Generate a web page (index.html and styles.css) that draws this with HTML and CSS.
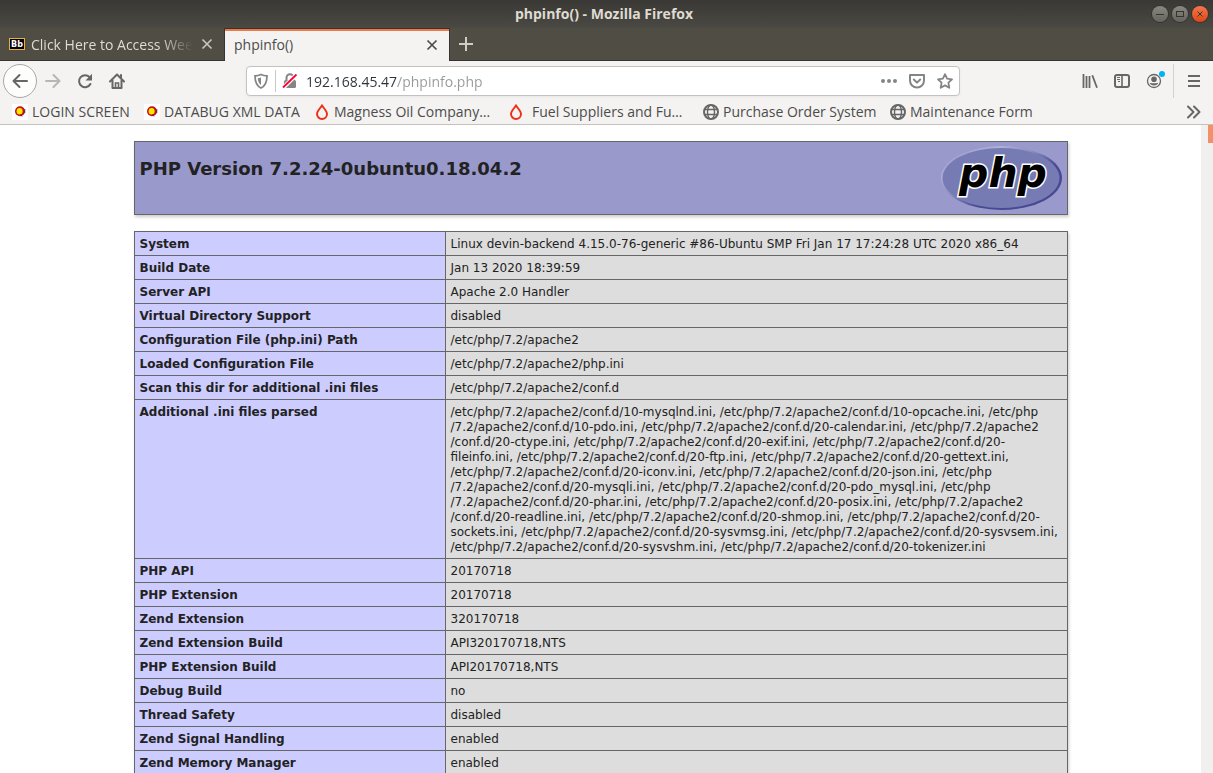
FILE: index.html
```html
<!DOCTYPE html>
<html lang="en">
<head>
<meta charset="utf-8">
<title>phpinfo()</title>
<link rel="stylesheet" href="styles.css">
</head>
<body>
<div class="window">
  <header class="top">
    <div class="titlebar">
      <div class="window-title">phpinfo() - Mozilla Firefox</div>
      <div class="window-buttons">
        <button class="win-btn" aria-label="Minimize"><svg viewBox="0 0 16 16"><path d="M4 8.5h8"/></svg></button>
        <button class="win-btn" aria-label="Maximize"><svg viewBox="0 0 16 16"><rect x="4.5" y="5.5" width="7" height="5"/></svg></button>
        <button class="win-btn win-close" aria-label="Close"><svg viewBox="0 0 16 16"><path d="M5.5 5.5l5 5M10.5 5.5l-5 5"/></svg></button>
      </div>
    </div>
    <div class="tabs">
      <div class="tab">
        <svg class="icon" viewBox="0 0 16 16"><rect x=".5" y="2.5" width="15" height="11" fill="#000" stroke="#e8b03a"/><text x="8" y="11" class="bb" text-anchor="middle">Bb</text></svg>
        <span class="tab-label tab-fade">Click Here to Access Wee</span>
        <button class="tab-close" aria-label="Close tab"><svg viewBox="0 0 16 16"><path d="M3.5 3.5l9 9M12.5 3.5l-9 9"/></svg></button>
      </div>
      <div class="tab active">
        <span class="tab-label">phpinfo()</span>
        <button class="tab-close" aria-label="Close tab"><svg viewBox="0 0 16 16"><path d="M3.5 3.5l9 9M12.5 3.5l-9 9"/></svg></button>
      </div>
      <button class="new-tab" aria-label="New tab"><svg class="icon" viewBox="0 0 16 16"><path d="M8 1v14M1 8h14" fill="none" stroke="#d0cdc6" stroke-width="2"/></svg></button>
    </div>
    <nav class="toolbar">
      <button class="tool back" aria-label="Back"><svg class="icon" viewBox="0 0 16 16"><path class="line" d="M15 8H2M7.5 2L1.5 8l6 6"/></svg></button>
      <button class="tool dim" aria-label="Forward"><svg class="icon" viewBox="0 0 16 16"><path class="line" d="M1 8h13M8.5 2l6 6-6 6"/></svg></button>
      <button class="tool" aria-label="Reload"><svg class="icon" viewBox="0 0 16 16"><path class="line" d="M12.6 4.2A6 6 0 1 0 13.4 11"/><path d="M15 .8v6.7H8.500z" fill="currentColor"/></svg></button>
      <button class="tool" aria-label="Home"><svg class="icon" viewBox="0 0 16 16"><path class="line" d="M1 8.500L8 1.500l7 7M3.500 7.500V15h9V7.500M12 2v3"/><path d="M6.500 15v-5h3v5" fill="none" stroke="currentColor" stroke-width="1.600"/></svg></button>
      <div class="urlbar">
        <svg class="icon" viewBox="0 0 16 16"><path d="M8 1.500c2 1 4 1.300 6 1.300C14 9 12.500 13 8 15 3.500 13 2 9 2 2.800c2 0 4-.3 6-1.300z" fill="none" stroke="currentColor" stroke-width="1.800"/><path d="M8 4.500v7.500C6 10.500 5 8.500 4.800 5.300 6 5.200 7 5 8 4.500z" fill="currentColor"/></svg>
        <span class="url-sep"></span>
        <svg class="icon" viewBox="0 0 16 16"><path d="M4.500 7V4.800a3.500 3.500 0 0 1 7 0V7" fill="none" stroke="currentColor" stroke-width="2"/><rect x="2" y="7" width="12" height="8" rx="1.500" fill="currentColor"/><path d="M1.500 14.500l13-13" stroke="#fff" stroke-width="4"/><path d="M1 14.500l13.500-13" stroke="#ff0039" stroke-width="1.800"/></svg>
        <input class="url" type="text" aria-label="Address" value="192.168.45.47/phpinfo.php">
        <button class="url-btn" aria-label="Page actions"><svg class="icon" viewBox="0 0 16 16"><g fill="currentColor"><circle cx="2" cy="8" r="2"/><circle cx="8" cy="8" r="2"/><circle cx="14" cy="8" r="2"/></g></svg></button>
        <button class="url-btn" aria-label="Save to Pocket"><svg class="icon" viewBox="0 0 16 16"><path class="line" d="M1 2h14v5.500a7 7 0 0 1-14 0zM4.800 6.500L8 9.600l3.200-3.100"/></svg></button>
        <button class="url-btn" aria-label="Bookmark this page"><svg class="icon" viewBox="0 0 16 16"><path d="M8 1.200l2.100 4.500 4.900.6-3.600 3.400.9 5.100L8 12.400l-4.300 2.400.9-5.100L1 6.300l4.900-.6z" fill="none" stroke="currentColor" stroke-width="1.800" stroke-linejoin="round"/></svg></button>
      </div>
      <div class="tools-right">
        <button class="tool" aria-label="Library"><svg class="icon" viewBox="0 0 16 16"><path d="M1.500 1v14M4.500 3v12M7.500 3v12M10.300 2.300L15 14.700" fill="none" stroke="currentColor" stroke-width="1.800"/></svg></button>
        <button class="tool" aria-label="Sidebars"><svg class="icon" viewBox="0 0 16 16"><rect class="line" x="1" y="2" width="14" height="12" rx="2"/><path d="M8 2v12" stroke="currentColor" stroke-width="1.600"/><path d="M3 4.500h3M3 6.500h3M4 8.500h2" stroke="currentColor"/></svg></button>
        <button class="tool account" aria-label="Account"><svg class="icon" viewBox="0 0 16 16"><circle cx="8" cy="8" r="6.500" fill="none" stroke="currentColor" stroke-width="1.300"/><circle cx="8" cy="6.200" r="2.800" fill="currentColor"/><path d="M3.800 9.700c2.500.8 5.900.8 8.400 0-.6 3.700-7.800 3.700-8.400 0z" fill="currentColor"/></svg><span class="badge"></span></button>
        <span class="tool-sep"></span>
        <button class="tool" aria-label="Menu"><svg class="icon" viewBox="0 0 16 16"><path d="M2 3h12M2 8h12M2 13h12" stroke="currentColor" stroke-width="2"/></svg></button>
      </div>
    </nav>
    <nav class="bookmarks">
      <a class="bookmark" href="#"><svg class="icon" viewBox="0 0 16 16"><rect width="16" height="16" fill="#fff"/><ellipse cx="8" cy="7.200" rx="5" ry="5" fill="#c4101c"/><ellipse cx="7.600" cy="7.200" rx="3" ry="3.300" fill="#ffe600"/><path d="M8.500 10l1.500 2.500M12.800 5v4" stroke="#333" stroke-width=".8"/></svg>LOGIN SCREEN</a>
      <a class="bookmark" href="#"><svg class="icon" viewBox="0 0 16 16"><rect width="16" height="16" fill="#fff"/><ellipse cx="8" cy="7.200" rx="5" ry="5" fill="#c4101c"/><ellipse cx="7.600" cy="7.200" rx="3" ry="3.300" fill="#ffe600"/><path d="M8.500 10l1.500 2.500M12.800 5v4" stroke="#333" stroke-width=".8"/></svg>DATABUG XML DATA</a>
      <a class="bookmark" href="#"><svg class="icon" viewBox="0 0 16 16"><path d="M8 1.500c2 3 5 5.700 5 8.500a5 5 0 0 1-10 0c0-2.800 3-5.500 5-8.500z" fill="none" stroke="#f02c13" stroke-width="1.900"/></svg>Magness Oil Company…</a>
      <a class="bookmark wide" href="#"><svg class="icon" viewBox="0 0 16 16"><path d="M8 1.500c2 3 5 5.700 5 8.500a5 5 0 0 1-10 0c0-2.800 3-5.500 5-8.500z" fill="none" stroke="#f02c13" stroke-width="1.900"/></svg>Fuel Suppliers and Fu…</a>
      <a class="bookmark" href="#"><svg class="icon" viewBox="0 0 16 16"><g fill="none" stroke="#666" stroke-width="1.400"><circle cx="8" cy="8" r="7" stroke-width="2"/><ellipse cx="8" cy="8" rx="3.500" ry="7"/><path d="M1.500 5.500h13M1.500 10.500h13"/></g></svg>Purchase Order System</a>
      <a class="bookmark" href="#"><svg class="icon" viewBox="0 0 16 16"><g fill="none" stroke="#666" stroke-width="1.400"><circle cx="8" cy="8" r="7" stroke-width="2"/><ellipse cx="8" cy="8" rx="3.500" ry="7"/><path d="M1.500 5.500h13M1.500 10.500h13"/></g></svg>Maintenance Form</a>
      <button class="more" aria-label="More bookmarks"><svg class="icon" viewBox="0 0 16 16"><path class="line" d="M2 2.500L7.500 8 2 13.500M8 2.500L13.500 8 8 13.500"/></svg></button>
    </nav>
  </header>
  <div class="viewport">
    <main class="page">
      <div class="banner">
        <h1>PHP Version 7.2.24-0ubuntu0.18.04.2</h1>
        <svg class="logo" viewBox="0 0 122 64" role="img" aria-label="PHP logo">
          <defs>
            <linearGradient id="rim" x1="0" y1="0" x2="1" y2="1"><stop offset="0" stop-color="#8f90c6"/><stop offset=".25" stop-color="#aeb2d5"/><stop offset=".42" stop-color="#8a8cc0"/><stop offset=".62" stop-color="#484893"/><stop offset="1" stop-color="#484893"/></linearGradient>
          </defs>
          <ellipse cx="61.500" cy="32" rx="60.500" ry="32" fill="url(#rim)"/>
          <ellipse cx="61" cy="32" rx="58.500" ry="30" fill="#777bb3"/>
          <text class="logo-text" x="63" y="41" text-anchor="middle">php</text>
        </svg>
      </div>
      <table class="info">
        <tbody>
          <tr><th scope="row">System</th><td>Linux devin-backend 4.15.0-76-generic #86-Ubuntu SMP Fri Jan 17 17:24:28 UTC 2020 x86_64</td></tr>
          <tr><th scope="row">Build Date</th><td>Jan 13 2020 18:39:59</td></tr>
          <tr><th scope="row">Server API</th><td>Apache 2.0 Handler</td></tr>
          <tr><th scope="row">Virtual Directory Support</th><td>disabled</td></tr>
          <tr><th scope="row">Configuration File (php.ini) Path</th><td>/etc/php/7.2/apache2</td></tr>
          <tr><th scope="row">Loaded Configuration File</th><td>/etc/php/7.2/apache2/php.ini</td></tr>
          <tr><th scope="row">Scan this dir for additional .ini files</th><td>/etc/php/7.2/apache2/conf.d</td></tr>
          <tr><th scope="row">Additional .ini files parsed</th><td>/etc/php/7.2/apache2/conf.d/10-mysqlnd.ini, /etc/php/7.2/apache2/conf.d/10-opcache.ini, /etc/php<br>/7.2/apache2/conf.d/10-pdo.ini, /etc/php/7.2/apache2/conf.d/20-calendar.ini, /etc/php/7.2/apache2<br>/conf.d/20-ctype.ini, /etc/php/7.2/apache2/conf.d/20-exif.ini, /etc/php/7.2/apache2/conf.d/20-<br>fileinfo.ini, /etc/php/7.2/apache2/conf.d/20-ftp.ini, /etc/php/7.2/apache2/conf.d/20-gettext.ini,<br>/etc/php/7.2/apache2/conf.d/20-iconv.ini, /etc/php/7.2/apache2/conf.d/20-json.ini, /etc/php<br>/7.2/apache2/conf.d/20-mysqli.ini, /etc/php/7.2/apache2/conf.d/20-pdo_mysql.ini, /etc/php<br>/7.2/apache2/conf.d/20-phar.ini, /etc/php/7.2/apache2/conf.d/20-posix.ini, /etc/php/7.2/apache2<br>/conf.d/20-readline.ini, /etc/php/7.2/apache2/conf.d/20-shmop.ini, /etc/php/7.2/apache2/conf.d/20-<br>sockets.ini, /etc/php/7.2/apache2/conf.d/20-sysvmsg.ini, /etc/php/7.2/apache2/conf.d/20-sysvsem.ini,<br>/etc/php/7.2/apache2/conf.d/20-sysvshm.ini, /etc/php/7.2/apache2/conf.d/20-tokenizer.ini</td></tr>
          <tr><th scope="row">PHP API</th><td>20170718</td></tr>
          <tr><th scope="row">PHP Extension</th><td>20170718</td></tr>
          <tr><th scope="row">Zend Extension</th><td>320170718</td></tr>
          <tr><th scope="row">Zend Extension Build</th><td>API320170718,NTS</td></tr>
          <tr><th scope="row">PHP Extension Build</th><td>API20170718,NTS</td></tr>
          <tr><th scope="row">Debug Build</th><td>no</td></tr>
          <tr><th scope="row">Thread Safety</th><td>disabled</td></tr>
          <tr><th scope="row">Zend Signal Handling</th><td>enabled</td></tr>
          <tr><th scope="row">Zend Memory Manager</th><td>enabled</td></tr>
        </tbody>
      </table>
    </main>
    <div class="scrollbar"><div class="thumb"></div></div>
  </div>
</div>
</body>
</html>
```
FILE: styles.css
```css
* { box-sizing: border-box; }
body { margin: 0; background: #fff; font-family: "Open Sans", "Noto Sans", sans-serif; font-size: 14px; color: #4c4c4c; }
button { border: 0; padding: 0; background: none; color: inherit; font: inherit; display: flex; align-items: center; justify-content: center; flex: none; }
.window { height: 100vh; display: flex; flex-direction: column; overflow: hidden; }
.icon { width: 16px; height: 16px; flex: none; display: block; }
.line { fill: none; stroke: currentColor; stroke-width: 2; stroke-linecap: round; stroke-linejoin: round; }
.top { flex: none; background: #f4f3f1; border-bottom: 1px solid #c5c2be; }

.titlebar { display: grid; grid-template-columns: 1fr auto 1fr; align-items: center; height: 28px; padding-right: 5px; background: linear-gradient(#393834, #4b4943); }
.window-title { grid-column: 2; font-weight: 700; font-size: 14px; line-height: 18px; color: #dfdbd2; }
.window-buttons { display: flex; gap: 4px; justify-content: flex-end; }
.win-btn { width: 16px; height: 16px; border-radius: 50%; background: linear-gradient(#8a8881, #65635d); box-shadow: 0 0 0 1px #35342f; }
.win-btn svg { width: 16px; height: 16px; fill: none; stroke: #35342f; stroke-width: 1; }
.win-close { background: linear-gradient(#f3764f, #dd4814); }

.tabs { display: flex; height: 33px; background: #504d45; border-bottom: 1px solid #35342f; }
.tab { display: flex; align-items: center; width: 224px; padding: 0 9px; gap: 6px; color: #dfdbd2; }
.tab.active { position: relative; width: 226px; height: 33px; padding-bottom: 1px; background: #f4f3f1; color: #4c4c4c; border: 1px solid #35342f; border-width: 1px 1px 0; box-shadow: inset 0 2px #f07746; }
.tab-label { flex: 1; white-space: nowrap; }
.tab-fade { -webkit-mask-image: linear-gradient(90deg, #000 80%, transparent); mask-image: linear-gradient(90deg, #000 80%, transparent); }
.tab-close svg { width: 16px; height: 16px; fill: none; stroke: currentColor; stroke-width: 1.7; }
.tab:not(.active) .tab-close { color: #c9c5bd; }
.bb { font: 700 8px "DejaVu Sans", sans-serif; fill: #fff; }
.new-tab { width: 32px; }

.toolbar { display: flex; align-items: center; height: 40px; padding: 0 3px; color: #666; }
.tool { width: 32px; height: 32px; }
.back { width: 34px; height: 34px; border: 1px solid #aaa7a3; border-radius: 50%; background: #fdfdfc; }
.dim { color: #b8b6b3; }
.urlbar { display: flex; align-items: center; gap: 6px; flex: 1; height: 30px; margin-left: 113px; padding: 0 6px; background: #fff; border: 1px solid #c5c2be; border-radius: 4px; box-shadow: 0 1px 3px #0000000d; color: #858585; }
.url-sep { width: 1px; height: 22px; background: #c8c8c8; }
.url { flex: 1; min-width: 0; border: 0; outline: 0; padding: 0 0 0 2px; font: inherit; color: transparent; background: linear-gradient(90deg, #2e3436 93px, #989898 93px); -webkit-background-clip: text; background-clip: text; }
.url-btn { width: 16px; margin-left: 6px; }
.tools-right { display: flex; align-items: center; margin-left: 114px; }
.account { position: relative; }
.badge { position: absolute; top: 6px; right: 5px; width: 6px; height: 6px; border-radius: 50%; background: #00b3f4; }
.tool-sep { width: 1px; height: 34px; margin: 0 4px 0 3px; background: #d3d1ce; }

.bookmarks { display: grid; grid-template-columns: 132px 170px 194px 195px 187px 1fr auto; align-items: center; height: 23px; padding: 0 11px 2px 12px; }
.bookmark { display: flex; align-items: center; gap: 4px; color: inherit; text-decoration: none; white-space: nowrap; }
.bookmark.wide { gap: 8px; }
.more { color: #666; }

.viewport { flex: 1; min-height: 0; display: flex; }
.page { flex: 1; overflow: hidden; padding-top: 16px; color: #222; font-family: "DejaVu Sans", sans-serif; }
.scrollbar { width: 12px; background: #f1f0ee; display: flex; justify-content: flex-end; }
.thumb { width: 5px; height: 18px; background: #f2906a; }
.banner, .info { width: 934px; max-width: 100%; margin: 0 auto 16px; box-shadow: 1px 2px 3px #ccc; }
.banner { display: flex; justify-content: space-between; height: 74px; padding: 4px 5px; border: 1px solid #666; background: #99c; }
.banner h1 { margin: 12px 0 0; font-size: 18px; line-height: 21px; }
.logo { width: 122px; height: 64px; flex: none; }
.logo-text { font: italic 700 41px "DejaVu Sans", sans-serif; fill: #000; stroke: #fff; stroke-width: 3px; paint-order: stroke; stroke-linejoin: miter; }
.info { border-collapse: collapse; font-size: 12px; line-height: 15px; }
.info th, .info td { border: 1px solid #666; padding: 5px 5px 3px; text-align: left; vertical-align: baseline; }
.info th { width: 311px; background: #ccf; }
.info td { background: #ddd; }
```
